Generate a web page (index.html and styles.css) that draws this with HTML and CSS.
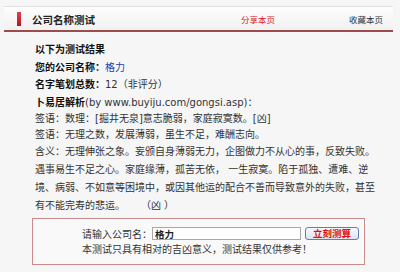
FILE: index.html
```html
<!DOCTYPE html>
<html lang="zh-CN">
<head>
  <meta charset="UTF-8">
  <title>公司名称测试</title>
  <link rel="stylesheet" href="styles.css">
</head>
<body>
  <div class="page">
    <div class="topline"></div>
    <div class="titlebar">
      <span class="mark"></span>
      <span class="title">公司名称测试</span>
      <a class="share" href="#">分享本页</a>
      <a class="fav" href="#">收藏本页</a>
    </div>

    <div class="result">
      <div class="row"><b>以下为测试结果</b></div>
      <div class="row"><b>您的公司名称：</b><span class="name">格力</span></div>
      <div class="row"><b>名字笔划总数：</b>12（非评分）</div>
      <div class="row"><b>卜易居解析</b>(by www.buyiju.com/gongsi.asp)：</div>
      <div class="sign">签语：数理：[掘井无泉]意志脆弱，家庭寂寞数。[凶]</div>
      <div class="sign">签语：无理之数，发展薄弱，虽生不足，难酬志向。</div>
      <div class="meaning">含义：无理伸张之象。妄颁自身薄弱无力，企图做力不从心的事，反致失败。遇事易生不足之心。家庭缘薄，孤苦无依， 一生寂寞。陷于孤独、遭难、逆境、病弱、不如意等困境中，或因其他运的配合不善而导致意外的失败，甚至有不能完寿的悲运。&nbsp;&nbsp;&nbsp;&nbsp;&nbsp;（凶 ）</div>
    </div>

    <form class="testform" onsubmit="return false">
      <div class="inputrow">
        <label for="cname">请输入公司名：</label>
        <input id="cname" type="text" value="格力">
        <button type="submit">立刻测算</button>
      </div>
      <p class="note">本测试只具有相对的吉凶意义，测试结果仅供参考！</p>
    </form>
  </div>
</body>
</html>
```

FILE: styles.css
```css
body {
  margin: 0;
  background: #f6f6f6;
  font-family: "DejaVu Sans", "Noto Sans CJK SC", sans-serif;
  font-size: 10px;
  color: #333;
}
.page {
  width: 389px;
  margin-left: 4px;
}
.topline {
  height: 6px;
  border-bottom: 1px solid #e0e0e0;
}
.titlebar {
  display: flex;
  align-items: center;
  height: 22px;
  padding-top: 1px;
  background: linear-gradient(#fdfdfd, #f1f1f1);
  border-bottom: 2px solid #9c4c4c;
}
.mark {
  width: 4px;
  height: 14px;
  margin-left: 13px;
  margin-right: 11px;
  background: linear-gradient(#e0404a, #b8141e);
}
.title {
  font-weight: bold;
  font-size: 10.5px;
  color: #222;
}
.titlebar a {
  font-size: 8.5px;
  text-decoration: none;
}
.share {
  margin-left: auto;
  margin-right: 74px;
  color: #d22;
}
.fav {
  margin-right: 10px;
  color: #333;
}
.result {
  padding: 9px 0 0 31px;
  width: 342px;
}
.row {
  line-height: 17.5px;
}
.row b {
  color: #111;
}
.name {
  color: #1a3fb0;
}
.sign {
  line-height: 16px;
}
.meaning {
  line-height: 18px;
}
.testform {
  box-sizing: border-box;
  width: 333px;
  height: 47px;
  margin: 3px 0 0 28px;
  padding: 7px 0 0 49px;
  background: #f9f9f9;
  border: 1px solid #c88a8a;
}
.inputrow {
  display: flex;
  align-items: center;
  gap: 4px;
}
.inputrow label {
  white-space: nowrap;
  margin-right: -4px;
}
.inputrow input {
  width: 149px;
  height: 13px;
  box-sizing: border-box;
  padding: 0 2px;
  border: 1px solid #a8a8a8;
  font: bold 9.5px "DejaVu Sans", "Noto Sans CJK SC", sans-serif;
  color: #222;
  background: #fff;
}
.inputrow button {
  width: 54px;
  height: 13px;
  padding: 0;
  border: 1px solid #5d7fb4;
  border-radius: 3px;
  background: linear-gradient(#f8f8ff, #dde4f0);
  color: #d11;
  font: bold 9.5px "Noto Sans CJK SC", sans-serif;
  line-height: 11px;
}
.note {
  margin: 2px 0 0;
  line-height: 14px;
}
```
